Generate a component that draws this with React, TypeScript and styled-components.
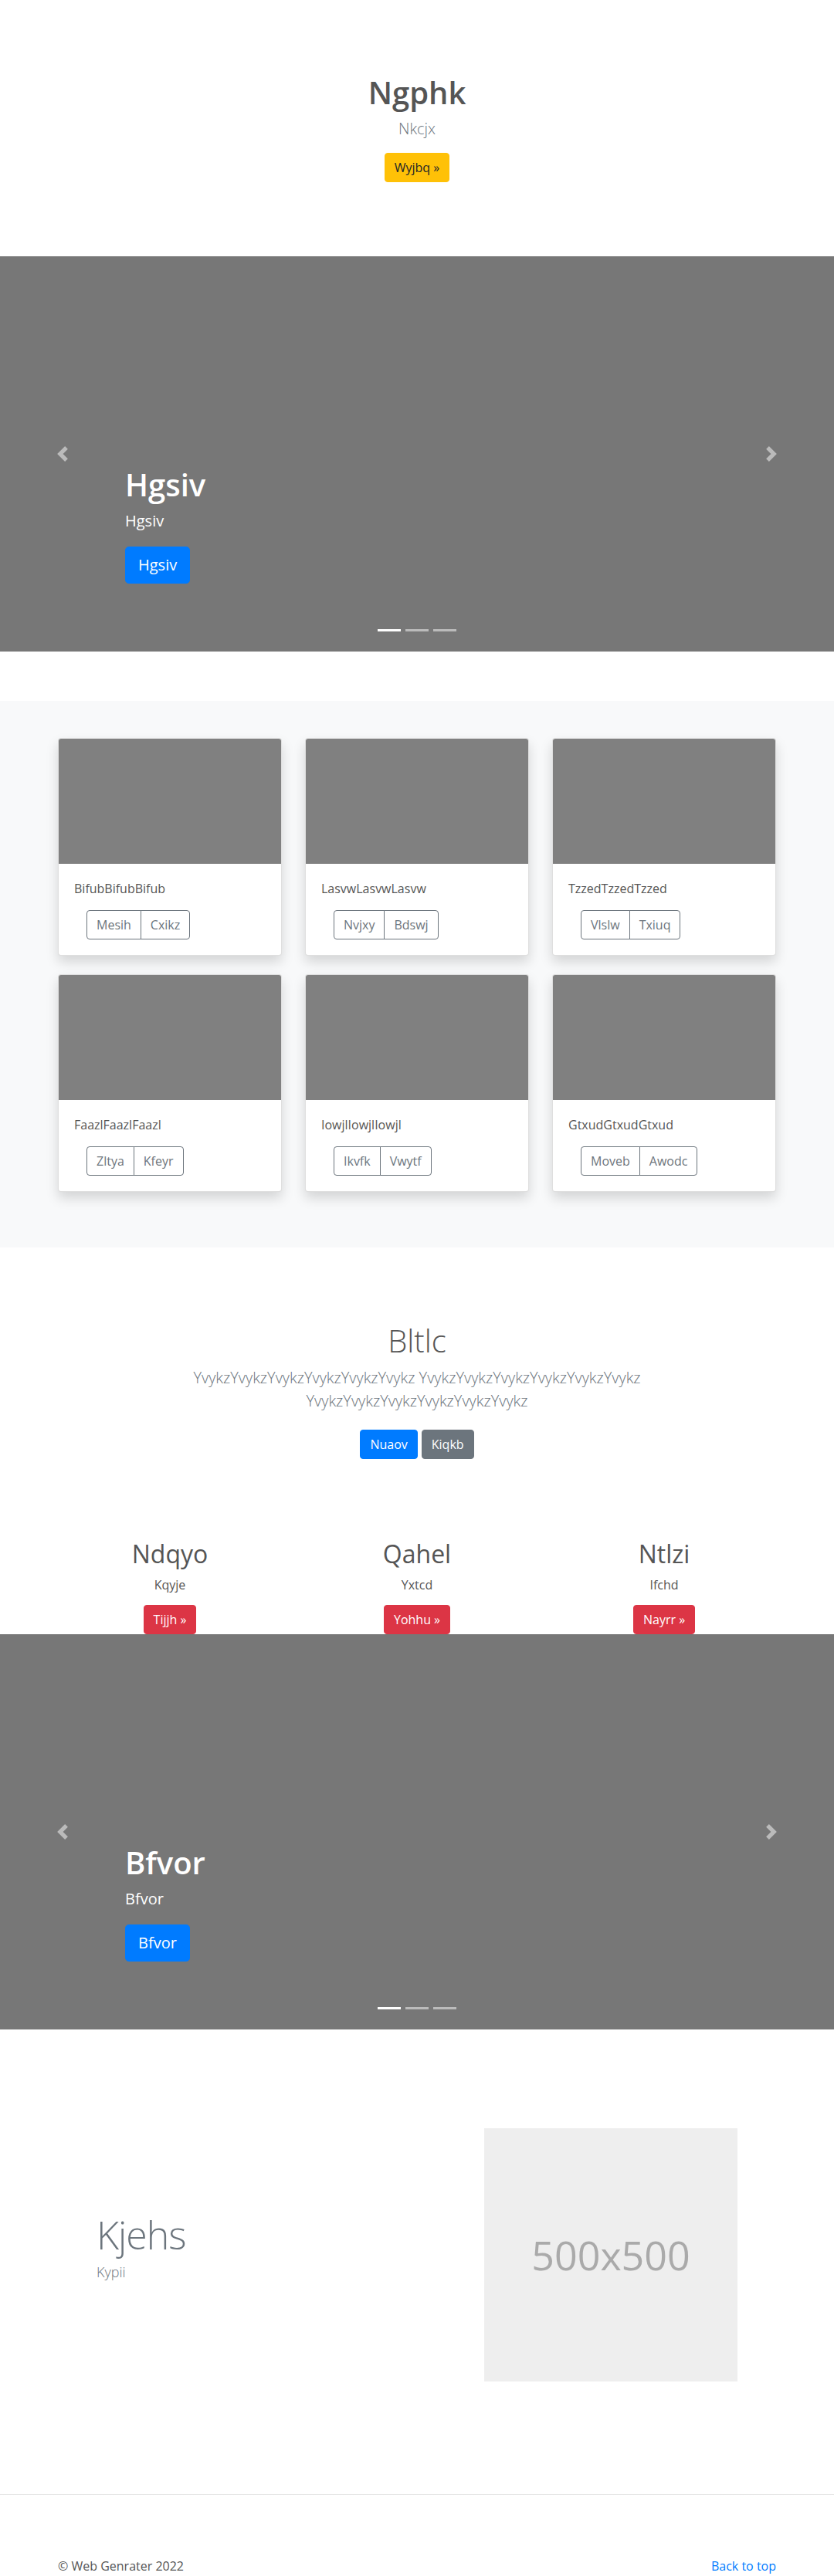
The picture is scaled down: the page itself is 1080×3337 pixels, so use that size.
import React from "react";
import styled, { createGlobalStyle, css } from "styled-components";

const GlobalStyle = createGlobalStyle`
  *, *::before, *::after { box-sizing: border-box; }
  html, body { margin: 0; padding: 0; }
  body {
    font-family: "Open Sans", "Noto Sans", "Liberation Sans", Arial, sans-serif;
    font-size: 16px;
    line-height: 1.5;
    color: #555;
    background: #fff;
  }
  h1, h2, p, ol { margin: 0; }
`;

type Variant = "primary" | "secondary" | "warning" | "danger" | "outline";

const palette: Record<Variant, { bg: string; border: string; color: string }> = {
  primary: { bg: "#007bff", border: "#007bff", color: "#fff" },
  secondary: { bg: "#6c757d", border: "#6c757d", color: "#fff" },
  warning: { bg: "#ffc107", border: "#ffc107", color: "#212529" },
  danger: { bg: "#dc3545", border: "#dc3545", color: "#fff" },
  outline: { bg: "transparent", border: "#6c757d", color: "#6c757d" },
};

const Button = styled.a<{ $variant: Variant; $lg?: boolean }>`
  display: inline-block;
  font-weight: 400;
  text-align: center;
  vertical-align: middle;
  text-decoration: none;
  white-space: nowrap;
  cursor: pointer;
  background: ${(p) => palette[p.$variant].bg};
  border: 1px solid ${(p) => palette[p.$variant].border};
  color: ${(p) => palette[p.$variant].color};
  padding: 6px 12px;
  font-size: 16px;
  line-height: 1.5;
  border-radius: 4px;
  ${(p) =>
    p.$lg &&
    css`
      padding: 8px 16px;
      font-size: 20px;
      border-radius: 4.8px;
    `}
`;

const Container = styled.div`
  width: 960px;
  max-width: 100%;
  margin: 0 auto;
  padding: 0 15px;
`;

/* ---------- Hero ---------- */
const Hero = styled.section`
  padding: 96px 0 96px;
  text-align: center;
`;

const HeroTitle = styled.h1<{ $light?: boolean; $gap?: number }>`
  font-size: 40px;
  line-height: 1.2;
  font-weight: ${(p) => (p.$light ? 300 : 600)};
  color: #555;
  margin-bottom: ${(p) => p.$gap ?? 8}px;
`;

const Lead = styled.p<{ $gap?: number }>`
  font-size: 20px;
  font-weight: 300;
  line-height: 1.5;
  color: #6c757d;
  margin-bottom: ${(p) => p.$gap ?? 16}px;
`;

/* ---------- Carousel ---------- */
const CarouselFrame = styled.div<{ $mb?: number }>`
  position: relative;
  height: 512px;
  background: #777;
  overflow: hidden;
  margin-bottom: ${(p) => p.$mb ?? 0}px;
`;

const Control = styled.a<{ $side: "left" | "right" }>`
  position: absolute;
  top: 0;
  bottom: 0;
  ${(p) => p.$side}: 0;
  width: 15%;
  display: flex;
  align-items: center;
  justify-content: center;
  opacity: 0.5;
`;

const Caption = styled.div`
  position: absolute;
  left: 15%;
  right: 15%;
  bottom: 88px;
  color: #fff;
  display: flex;
  flex-direction: column;
  align-items: flex-start;
`;

const CaptionTitle = styled.h1`
  font-size: 40px;
  line-height: 1.2;
  font-weight: 600;
  margin-bottom: 8px;
`;

const CaptionText = styled.p`
  font-size: 20px;
  line-height: 1.5;
  margin-bottom: 18px;
`;

const Indicators = styled.ol`
  position: absolute;
  left: 15%;
  right: 15%;
  bottom: 0;
  margin-bottom: 16px;
  padding: 0;
  list-style: none;
  display: flex;
  justify-content: center;
`;

const Indicator = styled.li<{ $active?: boolean }>`
  width: 30px;
  height: 3px;
  margin: 10px 3px;
  background: #fff;
  opacity: ${(p) => (p.$active ? 1 : 0.5)};
`;

const Chevron = ({ dir }: { dir: "prev" | "next" }) => (
  <svg width="20" height="20" viewBox="0 0 8 8" fill="#fff">
    <path
      d={
        dir === "prev"
          ? "M5.25 0l-4 4 4 4 1.5-1.5L4.25 4l2.5-2.5L5.25 0z"
          : "M2.75 0l-1.5 1.5L3.75 4l-2.5 2.5L2.75 8l4-4-4-4z"
      }
    />
  </svg>
);

const Carousel = ({ title, mb }: { title: string; mb?: number }) => (
  <CarouselFrame $mb={mb}>
    <Caption>
      <CaptionTitle>{title}</CaptionTitle>
      <CaptionText>{title}</CaptionText>
      <Button $variant="primary" $lg>
        {title}
      </Button>
    </Caption>
    <Control $side="left">
      <Chevron dir="prev" />
    </Control>
    <Control $side="right">
      <Chevron dir="next" />
    </Control>
    <Indicators>
      <Indicator $active />
      <Indicator />
      <Indicator />
    </Indicators>
  </CarouselFrame>
);

/* ---------- Album ---------- */
const Album = styled.section`
  background: #f8f9fa;
  padding: 48px 0 72px;
`;

const CardGrid = styled.div`
  display: grid;
  grid-template-columns: repeat(3, 1fr);
  column-gap: 30px;
  row-gap: 24px;
`;

const Card = styled.div`
  background: #fff;
  border: 1px solid rgba(0, 0, 0, 0.125);
  border-radius: 4px;
  overflow: hidden;
  box-shadow: 0 8px 16px rgba(0, 0, 0, 0.15);
`;

const CardImage = styled.div`
  height: 162px;
  background: #808080;
`;

const CardBody = styled.div`
  padding: 20px;
`;

const CardText = styled.p`
  margin-bottom: 16px;
  color: #555;
`;

const BtnGroup = styled.div`
  display: inline-flex;
  margin-left: 16px;
  & > a:first-child {
    border-top-right-radius: 0;
    border-bottom-right-radius: 0;
  }
  & > a:last-child {
    margin-left: -1px;
    border-top-left-radius: 0;
    border-bottom-left-radius: 0;
  }
`;

const cards = [
  { text: "BifubBifubBifub", a: "Mesih", b: "Cxikz" },
  { text: "LasvwLasvwLasvw", a: "Nvjxy", b: "Bdswj" },
  { text: "TzzedTzzedTzzed", a: "Vlslw", b: "Txiuq" },
  { text: "FaazlFaazlFaazl", a: "Zltya", b: "Kfeyr" },
  { text: "IowjlIowjlIowjl", a: "Ikvfk", b: "Vwytf" },
  { text: "GtxudGtxudGtxud", a: "Moveb", b: "Awodc" },
];

/* ---------- Jumbotron ---------- */
const Jumbo = styled.section`
  padding-top: 97px;
  text-align: center;
`;

const JumboLead = styled(Lead)`
  max-width: 700px;
  margin-left: auto;
  margin-right: auto;
`;

const ButtonRow = styled.div`
  display: flex;
  justify-content: center;
  gap: 5px;
`;

/* ---------- Marketing ---------- */
const Marketing = styled.section`
  padding-top: 104px;
`;

const MarketingGrid = styled.div`
  display: grid;
  grid-template-columns: repeat(3, 1fr);
  column-gap: 30px;
  text-align: center;
`;

const MarketingTitle = styled.h2`
  font-size: 32px;
  line-height: 1.2;
  font-weight: 500;
  color: #555;
  margin-bottom: 9px;
`;

const MarketingText = styled.p`
  margin-bottom: 14px;
`;

const marketing = [
  { t: "Ndqyo", p: "Kqyje", b: "Tijjh »" },
  { t: "Qahel", p: "Yxtcd", b: "Yohhu »" },
  { t: "Ntlzi", p: "Ifchd", b: "Nayrr »" },
];

/* ---------- Featurette ---------- */
const Featurette = styled.section`
  padding: 128px 0 146px;
`;

const FeaturetteRow = styled.div`
  display: grid;
  grid-template-columns: 1fr 328px;
  column-gap: 30px;
  align-items: center;
  margin: 0 50px;
`;

const FeaturetteHeading = styled.h2`
  font-size: 50px;
  line-height: 1;
  font-weight: 300;
  letter-spacing: -1px;
  color: #6c757d;
  margin-bottom: 10px;
`;

const FeaturetteText = styled.p`
  font-size: 18px;
  font-weight: 300;
  line-height: 1.5;
  color: #6c757d;
  margin-bottom: 16px;
`;

const Placeholder = styled.div`
  width: 328px;
  height: 328px;
  background: #eee;
  color: #aaa;
  font-size: 52px;
  display: flex;
  align-items: center;
  justify-content: center;
`;

/* ---------- Footer ---------- */
const Divider = styled.hr`
  margin: 0;
  border: 0;
  border-top: 1px solid #e5e5e5;
`;

const Footer = styled.footer`
  padding-top: 80px;
`;

const FooterRow = styled.div`
  display: flex;
  justify-content: space-between;
  line-height: 24px;
`;

const FooterLink = styled.a`
  color: #007bff;
  text-decoration: none;
`;

export default function App() {
  return (
    <>
      <GlobalStyle />
      <Hero>
        <HeroTitle>Ngphk</HeroTitle>
        <Lead>Nkcjx</Lead>
        <Button $variant="warning">Wyjbq »</Button>
      </Hero>

      <Carousel title="Hgsiv" mb={64} />

      <Album>
        <Container>
          <CardGrid>
            {cards.map((c) => (
              <Card key={c.text}>
                <CardImage />
                <CardBody>
                  <CardText>{c.text}</CardText>
                  <BtnGroup>
                    <Button $variant="outline">{c.a}</Button>
                    <Button $variant="outline">{c.b}</Button>
                  </BtnGroup>
                </CardBody>
              </Card>
            ))}
          </CardGrid>
        </Container>
      </Album>

      <Jumbo>
        <Container>
          <HeroTitle $light $gap={9}>
            Bltlc
          </HeroTitle>
          <JumboLead $gap={22}>
            YvykzYvykzYvykzYvykzYvykzYvykz YvykzYvykzYvykzYvykzYvykzYvykz
            YvykzYvykzYvykzYvykzYvykzYvykz
          </JumboLead>
          <ButtonRow>
            <Button $variant="primary">Nuaov</Button>
            <Button $variant="secondary">Kiqkb</Button>
          </ButtonRow>
        </Container>
      </Jumbo>

      <Marketing>
        <Container>
          <MarketingGrid>
            {marketing.map((m) => (
              <div key={m.t}>
                <MarketingTitle>{m.t}</MarketingTitle>
                <MarketingText>{m.p}</MarketingText>
                <Button $variant="danger">{m.b}</Button>
              </div>
            ))}
          </MarketingGrid>
        </Container>
      </Marketing>

      <Carousel title="Bfvor" />

      <Featurette>
        <Container>
          <FeaturetteRow>
            <div>
              <FeaturetteHeading>Kjehs</FeaturetteHeading>
              <FeaturetteText>Kypii</FeaturetteText>
            </div>
            <Placeholder>500x500</Placeholder>
          </FeaturetteRow>
        </Container>
      </Featurette>

      <Divider />
      <Footer>
        <Container>
          <FooterRow>
            <p>© Web Genrater 2022</p>
            <FooterLink href="#">Back to top</FooterLink>
          </FooterRow>
        </Container>
      </Footer>
    </>
  );
}
